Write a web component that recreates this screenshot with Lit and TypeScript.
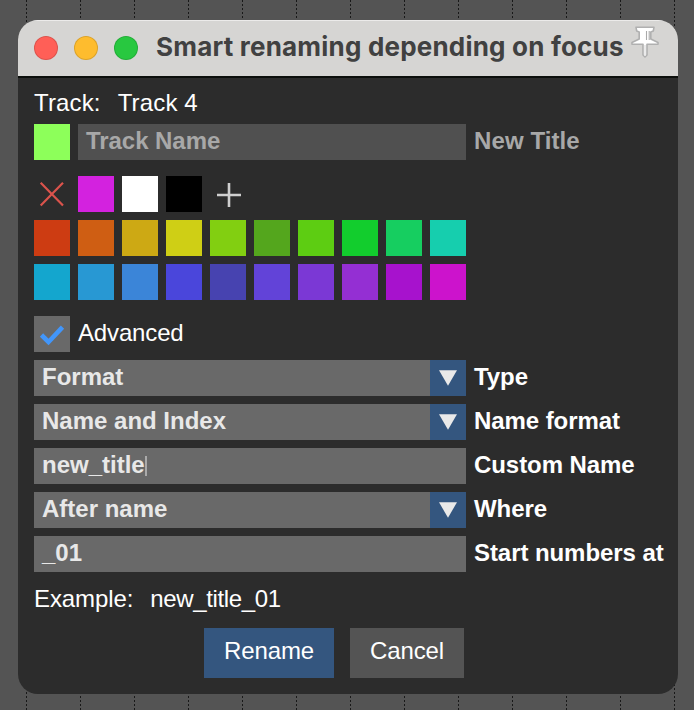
import { LitElement, html, css } from "lit";
import { customElement, property } from "lit/decorators.js";

@customElement("color-swatch")
class ColorSwatch extends LitElement {
  @property() color = "#000";
  static styles = css`
    :host { display: block; flex: none; width: 36px; height: 36px; }
    .fill { width: 100%; height: 100%; }
  `;
  render() {
    return html`<div class="fill" style="background:${this.color}"></div>`;
  }
}

@customElement("form-row")
class FormRow extends LitElement {
  @property() label = "";
  @property() value = "";
  @property() kind = "text";
  @property({ type: Boolean }) caret = false;
  static styles = css`
    :host { display: flex; gap: 8px; height: 36px; font-weight: 700; line-height: 34px; white-space: nowrap; }
    .field { display: flex; flex: none; width: 432px; background: #696969; color: #e8e8e8; }
    .value { flex: 1; padding-left: 8px; display: flex; }
    .caret { width: 2px; height: 20px; margin: 8px 0 0 0; background: #aaa; }
    .arrow { width: 36px; height: 36px; background: #34567f; }
    .arrow svg { display: block; }
    .label { color: #fff; letter-spacing: -0.07px; }
  `;
  render() {
    return html`
      <div class="field">
        <div class="value"><span>${this.value}</span>${this.caret ? html`<i class="caret"></i>` : ""}</div>
        ${this.kind === "select"
          ? html`<div class="arrow"><svg width="36" height="36"><path d="M9 10.3H27L18 25.7Z" fill="#e9e9e9" /></svg></div>`
          : ""}
      </div>
      <div class="label"><span>${this.label}</span></div>
    `;
  }
}

@customElement("app-root")
class AppRoot extends LitElement {
  static styles = css`
    :host {
      display: block; box-sizing: border-box; width: 694px; height: 710px; overflow: hidden;
      padding: 20px 16px 0 18px;
      font: 24px "Liberation Sans", Arial, sans-serif; color: #fff;
      background-color: #545454;
      background-image: linear-gradient(#545454 50%, transparent 0), linear-gradient(90deg, #181818 1px, transparent 1px);
      background-size: 100% 4px, 54px 100%;
      background-position: 0 2px, 26px 0;
    }
    .window { width: 660px; height: 674px; border-radius: 20px; overflow: hidden; background: #2c2c2c; }
    .titlebar {
      display: flex; box-sizing: border-box; height: 58px; padding-left: 16px; background: #d6d5d3;
      border-bottom: 2px solid #0c0f0c; box-shadow: inset 0 1px #ecebea;
    }
    .lights { display: flex; gap: 16px; margin-top: 16px; }
    .light { box-sizing: border-box; width: 24px; height: 24px; border-radius: 50%; border: 1px solid #0002; }
    .red { background: #ff5f57; }
    .yellow { background: #febc2e; }
    .green { background: #28c840; }
    .title {
      margin-left: 18px; width: 468px; white-space: nowrap; color: #414141; letter-spacing: 0.2px;
      font: 700 26px/54px Inter, "Liberation Sans", sans-serif;
    }
    .pin { margin: 4px 0 0 6px; flex: none; }
    .body { padding: 8px 0 0 16px; white-space: nowrap; }
    .info { display: flex; gap: 17px; height: 38px; line-height: 33px; letter-spacing: 0.15px; }
    .row { display: flex; gap: 8px; height: 36px; }
    .name, .newtitle { font-weight: 700; color: #a8a8a8; line-height: 34px; }
    .newtitle { letter-spacing: 0.1px; }
    .name { flex: none; box-sizing: border-box; width: 388px; padding-left: 8px; background: #505050; letter-spacing: -0.05px; }
    .custom { margin-top: 16px; }
    .palette { display: grid; grid-template-columns: repeat(10, 36px); gap: 8px; margin-top: 8px; }
    .tool { display: block; width: 36px; height: 36px; }
    .advanced { margin: 16px 0 8px; line-height: 34px; letter-spacing: -0.15px; }
    .check { width: 36px; height: 36px; background: #696969; }
    .fields { display: grid; gap: 8px; }
    .example { display: flex; gap: 17px; height: 46px; margin-top: 10px; line-height: 34px; letter-spacing: -0.1px; }
    .result { letter-spacing: -0.35px; }
    .buttons { display: flex; gap: 16px; padding-left: 170px; letter-spacing: -0.12px; }
    .btn { height: 50px; line-height: 46px; text-align: center; background: #545454; width: 114px; }
    .primary { background: #34567f; width: 130px; }
  `;

  palette = [
    "#cd3c12", "#cf5e13", "#cda914", "#cfcf15", "#82cf11", "#54a61d", "#5dcd12", "#12cd2d", "#16ce60", "#16ceae",
    "#14a6ce", "#2898d3", "#3b85d8", "#4a46db", "#4743b0", "#6243d8", "#7b38d5", "#942fd3", "#a712cd", "#cc13cc",
  ];

  render() {
    return html`
      <div class="window">
        <div class="titlebar">
          <div class="lights">
            <i class="light red"></i><i class="light yellow"></i><i class="light green"></i>
          </div>
          <div class="title"><span>Smart renaming depending on focus</span></div>
          <svg class="pin" width="32" height="36" viewBox="630 24 32 36">
            <path d="M636 27.2H654L653.3 31L650.8 32V39L658 42.5V44.2H647V55L645 57L643 55V44.2H632V42.5L639.2 39V32L636.7 31Z"
              fill="#fff" stroke="#b0b0b0" stroke-width="1.6" stroke-linejoin="round" />
            <path d="M646.5 31V40M649.2 31V40" stroke="#aaa" stroke-width="1.1" />
            <path d="M645 45V56" stroke="#e4e4e4" stroke-width="1.5" />
          </svg>
        </div>
        <div class="body">
          <div class="info"><span>Track:</span><span>Track 4</span></div>
          <div class="row">
            <color-swatch color="#8dff5a"></color-swatch>
            <div class="name"><span>Track Name</span></div>
            <div class="newtitle"><span>New Title</span></div>
          </div>
          <div class="row custom">
            <svg class="tool" viewBox="0 0 36 36"><path d="M6.7 6.7L29 29.6M29 6.7L6.7 29.6" stroke="#da534c" stroke-width="2.2" /></svg>
            <color-swatch color="#d322df"></color-swatch>
            <color-swatch color="#fff"></color-swatch>
            <color-swatch color="#000"></color-swatch>
            <svg class="tool" viewBox="0 0 36 36"><path d="M7 19H31M19 7V31" stroke="#cfcfcf" stroke-width="2.6" /></svg>
          </div>
          <div class="palette">${this.palette.map((c) => html`<color-swatch color=${c}></color-swatch>`)}</div>
          <div class="row advanced">
            <svg class="check" viewBox="0 0 36 36"><path d="M7.5 19L14.5 26L28.5 11.2" fill="none" stroke="#4296fa" stroke-width="4.6" /></svg>
            <span>Advanced</span>
          </div>
          <div class="fields">
            <form-row kind="select" value="Format" label="Type"></form-row>
            <form-row kind="select" value="Name and Index" label="Name format"></form-row>
            <form-row value="new_title" label="Custom Name" caret></form-row>
            <form-row kind="select" value="After name" label="Where"></form-row>
            <form-row value="_01" label="Start numbers at"></form-row>
          </div>
          <div class="example"><span>Example:</span><span class="result">new_title_01</span></div>
          <div class="buttons">
            <div class="btn primary">Rename</div>
            <div class="btn">Cancel</div>
          </div>
        </div>
      </div>
    `;
  }
}
